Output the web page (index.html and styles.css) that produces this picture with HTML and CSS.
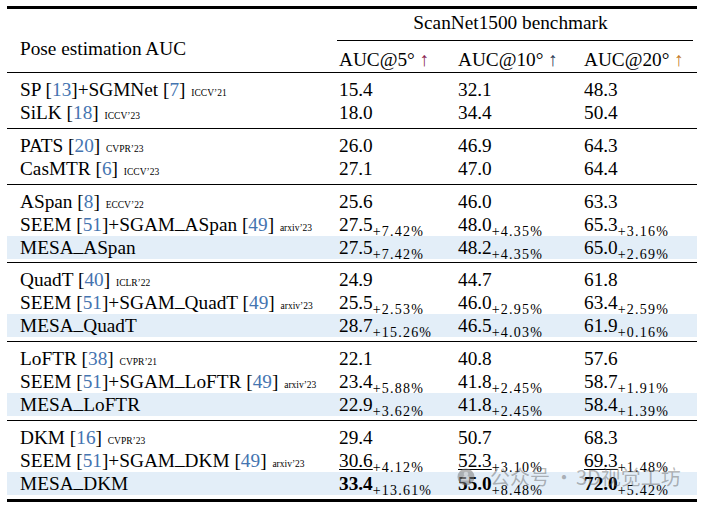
FILE: index.html
```html
<!DOCTYPE html>
<html>
<head>
<meta charset="utf-8">
<link rel="stylesheet" href="styles.css">
</head>
<body>
<div class="page">
  <div class="tbl">
    <div class="head">
      <div class="hleft">Pose estimation AUC</div>
      <div class="hright">
        <div class="bench">ScanNet1500 benchmark</div>
        <div class="cmid"></div>
        <div class="hcols">
          <div>AUC@5° <span class="ar a5">↑</span></div>
          <div>AUC@10° <span class="ar a10">↑</span></div>
          <div>AUC@20° <span class="ar a20">↑</span></div>
        </div>
      </div>
    </div>

    <div class="group">
      <div class="row">
        <div class="c1">SP [<span class="ref">13</span>]+SGMNet [<span class="ref">7</span>] <span class="venue">ICCV’21</span></div>
        <div>15.4</div><div>32.1</div><div>48.3</div>
      </div>
      <div class="row">
        <div class="c1">SiLK [<span class="ref">18</span>] <span class="venue">ICCV’23</span></div>
        <div>18.0</div><div>34.4</div><div>50.4</div>
      </div>
    </div>

    <div class="group">
      <div class="row">
        <div class="c1">PATS [<span class="ref">20</span>] <span class="venue">CVPR’23</span></div>
        <div>26.0</div><div>46.9</div><div>64.3</div>
      </div>
      <div class="row">
        <div class="c1">CasMTR [<span class="ref">6</span>] <span class="venue">ICCV’23</span></div>
        <div>27.1</div><div>47.0</div><div>64.4</div>
      </div>
    </div>

    <div class="group">
      <div class="row">
        <div class="c1">ASpan [<span class="ref">8</span>] <span class="venue">ECCV’22</span></div>
        <div>25.6</div><div>46.0</div><div>63.3</div>
      </div>
      <div class="row">
        <div class="c1">SEEM [<span class="ref">51</span>]+SGAM<span class="us">_</span>ASpan [<span class="ref">49</span>] <span class="venue">arxiv’23</span></div>
        <div>27.5<span class="sub">+7.42%</span></div><div>48.0<span class="sub">+4.35%</span></div><div>65.3<span class="sub">+3.16%</span></div>
      </div>
      <div class="row hl">
        <div class="c1">MESA<span class="us">_</span>ASpan</div>
        <div>27.5<span class="sub">+7.42%</span></div><div>48.2<span class="sub">+4.35%</span></div><div>65.0<span class="sub">+2.69%</span></div>
      </div>
    </div>

    <div class="group">
      <div class="row">
        <div class="c1">QuadT [<span class="ref">40</span>] <span class="venue">ICLR’22</span></div>
        <div>24.9</div><div>44.7</div><div>61.8</div>
      </div>
      <div class="row">
        <div class="c1">SEEM [<span class="ref">51</span>]+SGAM<span class="us">_</span>QuadT [<span class="ref">49</span>] <span class="venue">arxiv’23</span></div>
        <div>25.5<span class="sub">+2.53%</span></div><div>46.0<span class="sub">+2.95%</span></div><div>63.4<span class="sub">+2.59%</span></div>
      </div>
      <div class="row hl">
        <div class="c1">MESA<span class="us">_</span>QuadT</div>
        <div>28.7<span class="sub">+15.26%</span></div><div>46.5<span class="sub">+4.03%</span></div><div>61.9<span class="sub">+0.16%</span></div>
      </div>
    </div>

    <div class="group">
      <div class="row">
        <div class="c1">LoFTR [<span class="ref">38</span>] <span class="venue">CVPR’21</span></div>
        <div>22.1</div><div>40.8</div><div>57.6</div>
      </div>
      <div class="row">
        <div class="c1">SEEM [<span class="ref">51</span>]+SGAM<span class="us">_</span>LoFTR [<span class="ref">49</span>] <span class="venue">arxiv’23</span></div>
        <div>23.4<span class="sub">+5.88%</span></div><div>41.8<span class="sub">+2.45%</span></div><div>58.7<span class="sub">+1.91%</span></div>
      </div>
      <div class="row hl">
        <div class="c1">MESA<span class="us">_</span>LoFTR</div>
        <div>22.9<span class="sub">+3.62%</span></div><div>41.8<span class="sub">+2.45%</span></div><div>58.4<span class="sub">+1.39%</span></div>
      </div>
    </div>

    <div class="group last">
      <div class="row">
        <div class="c1">DKM [<span class="ref">16</span>] <span class="venue">CVPR’23</span></div>
        <div>29.4</div><div>50.7</div><div>68.3</div>
      </div>
      <div class="row">
        <div class="c1">SEEM [<span class="ref">51</span>]+SGAM<span class="us">_</span>DKM [<span class="ref">49</span>] <span class="venue">arxiv’23</span></div>
        <div><span class="ul">30.6</span><span class="sub">+4.12%</span></div><div><span class="ul">52.3</span><span class="sub">+3.10%</span></div><div><span class="ul">69.3</span><span class="sub">+1.48%</span></div>
      </div>
      <div class="row hl">
        <div class="c1">MESA<span class="us">_</span>DKM</div>
        <div><b>33.4</b><span class="sub">+13.61%</span></div><div><b>55.0</b><span class="sub">+8.48%</span></div><div><b>72.0</b><span class="sub">+5.42%</span></div>
      </div>
    </div>
  </div>

  <div class="wm">
    <svg class="wm-icon" width="20" height="18" viewBox="0 0 20 18">
      <circle cx="10" cy="9" r="8.5" fill="#7a7a7a"/>
      <path d="M5 12.5 Q6 8 10 7.5 Q14 8 15 12.5 Z" fill="#bdbdbd"/>
      <circle cx="10" cy="6" r="2.3" fill="#bdbdbd"/>
    </svg>
    <span class="wm-t1">公众号</span>
    <span class="wm-dot">·</span>
    <span class="wm-t2">3D视觉工坊</span>
  </div>
</div>
</body>
</html>
```
FILE: styles.css
```css
html, body {
  margin: 0;
  padding: 0;
  background: #ffffff;
}

.page {
  position: relative;
  width: 701px;
  height: 505px;
  overflow: hidden;
}

.tbl {
  margin: 6px 0 0 7px;
  width: 690px;
  border-top: 3px solid #000;
  font-family: "Liberation Serif", "Times New Roman", serif;
  font-size: 19.3px;
  line-height: 23px;
  color: #000;
}

.head {
  display: grid;
  grid-template-columns: 332px 358px;
  padding: 1.5px 0 1px 0;
  border-bottom: 1px solid #000;
}

.hleft {
  padding: 26.4px 0 0 13px;
}

.bench {
  text-align: center;
  padding-right: 15px;
}

.cmid {
  height: 1px;
  background: #000;
  margin: 6.5px 4px 7px -2px;
}

.hcols {
  display: grid;
  grid-template-columns: 119px 126px 113px;
}

.ar { line-height: 0; }
.a5 { color: #8a1f4f; }
.a10 { color: #2e3a55; }
.a20 { color: #c47a2a; }

.group {
  padding: 5px 0 3.75px 0;
  border-bottom: 1px solid #000;
}

.group.last {
  border-bottom: 3px solid #000;
}

.row {
  display: grid;
  grid-template-columns: 332px 119px 126px 113px;
  height: 23px;
  white-space: nowrap;
}

.row.hl {
  background: #e3eef8;
}

.c1 {
  padding-left: 13px;
}

.ref {
  color: #4474b0;
}

.venue {
  font-size: 9.5px;
  line-height: 0;
  margin-left: 1px;
}

.us {
  line-height: 0;
  vertical-align: 2.5px;
}

.sub {
  font-size: 14px;
  line-height: 0;
  letter-spacing: 1.2px;
  vertical-align: -5px;
}

.ul {
  text-decoration: underline;
  text-decoration-thickness: 1px;
  text-underline-offset: 2px;
}

b {
  font-weight: bold;
}

.wm {
  position: absolute;
  left: 456px;
  top: 464px;
  display: flex;
  align-items: center;
  font-family: "Noto Sans CJK SC", sans-serif;
  font-size: 20px;
  line-height: 26px;
  color: rgba(95, 95, 95, 0.45);
}

.wm-icon {
  opacity: 0.55;
  margin-right: 14px;
}

.wm-dot {
  margin: 0 2px 0 4px;
}
```
